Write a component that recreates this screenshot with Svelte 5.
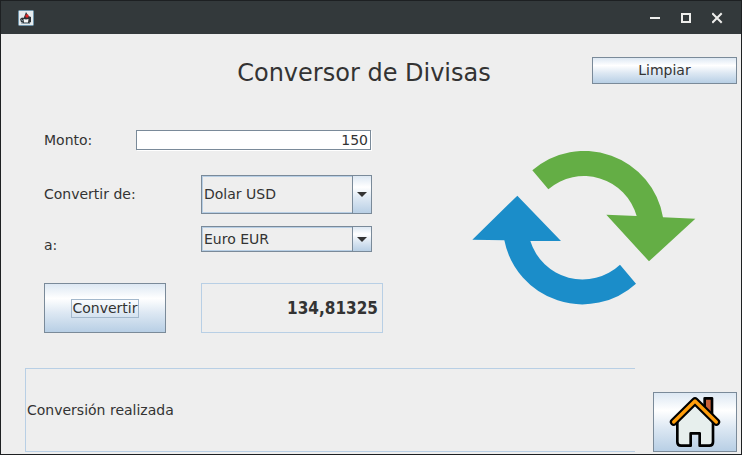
<script>
  let amount = $state('150');
  let from = $state('Dolar USD');
  let to = $state('Euro EUR');
  let result = $state('134,81325');
  let status = $state('Conversión realizada');

  const currencies = ['Dolar USD', 'Euro EUR'];
  const rates = { 'Dolar USD': 1, 'Euro EUR': 0.898755 };

  function convert() {
    const value = (Number(amount) * rates[to]) / rates[from];
    result = String(Number(value.toFixed(5))).replace('.', ',');
    status = 'Conversión realizada';
  }

  function clear() {
    amount = '';
    result = '';
    status = '';
  }
</script>

{#snippet arrow()}
  <span class="arrow" aria-hidden="true">
    <svg width="10" height="5" viewBox="0 0 10 5"><path d="M0 0H10L5 5Z" fill="#333" /></svg>
  </span>
{/snippet}

<div class="window">
  <header class="titlebar">
    <svg class="app-icon" width="16" height="16" viewBox="0 0 16 16" aria-hidden="true">
      <rect x=".5" y=".5" width="15" height="15" rx="1" fill="#e6ebee" stroke="#6f94aa" />
      <path d="M2 9L4 7.5L5.5 8L6.5 6L8 2L10.5 6L13 7V12L11 13H5L3 12Z" fill="#2e3438" />
      <path d="M5.5 9L8 9.5L10.5 9L10 12.5H6Z" fill="#f5f7f8" />
      <path d="M3 9.5L5 11M3 13L6 13.5H12" stroke="#8297a3" fill="none" />
      <circle cx="9" cy="6" r="1.7" fill="#e02222" />
    </svg>
    <div class="controls">
      <button aria-label="Minimizar">
        <svg width="11" height="12" viewBox="0 0 11 12"><path d="M0 6H10" stroke="#eeeeec" stroke-width="2" /></svg>
      </button>
      <button aria-label="Maximizar">
        <svg width="11" height="12" viewBox="0 0 11 12"><rect x="1" y="2" width="8" height="8" fill="none" stroke="#eeeeec" stroke-width="2" /></svg>
      </button>
      <button aria-label="Cerrar">
        <svg width="11" height="12" viewBox="0 0 11 12"><path d="M1 2L9 10M9 2L1 10" stroke="#eeeeec" stroke-width="2" stroke-linecap="square" /></svg>
      </button>
    </div>
  </header>

  <main>
    <div class="top">
      <h1>Conversor de Divisas</h1>
      <button class="metal clear" onclick={clear}>Limpiar</button>
    </div>

    <div class="middle">
      <div class="form">
        <div class="row amount-row">
          <label for="amount">Monto:</label>
          <input id="amount" type="text" bind:value={amount} />
        </div>
        <div class="row from-row">
          <label for="from">Convertir de:</label>
          <div class="combo">
            <select id="from" bind:value={from}>
              {#each currencies as c}<option>{c}</option>{/each}
            </select>
            {@render arrow()}
          </div>
        </div>
        <div class="row to-row">
          <label for="to">a:</label>
          <div class="combo">
            <select id="to" bind:value={to}>
              {#each currencies as c}<option>{c}</option>{/each}
            </select>
            {@render arrow()}
          </div>
        </div>
        <div class="row result-row">
          <button class="metal convert" onclick={convert}><span>Convertir</span></button>
          <output for="amount from to">{result}</output>
        </div>
      </div>

      <svg class="cycle" width="224" height="154" viewBox="36 32 672 462" aria-hidden="true">
        <path fill="#64ae45" d="M217 90A239 239 0 0 1 609 231L706 235L567 363L439 223L530 227A164 164 0 0 0 265 147Z" />
        <path fill="#1b8dc9" d="M528 430A239 239 0 0 1 133 300L37 298L172 166L303 302L211 302A164 164 0 0 0 480 373Z" />
      </svg>
    </div>

    <div class="bottom">
      <div class="status" role="status">{status}</div>
      <button class="metal home" aria-label="Inicio">
        <svg width="54" height="54" viewBox="84 45 162 162">
          <path d="M194 55H216V104H194Z" fill="#c8623a" stroke="#000" stroke-width="8" stroke-linejoin="round" />
          <path d="M112 118L165 66L219 118V186Q219 197 208 197H179V160H152V197H123Q112 197 112 186Z" fill="#e7efed" stroke="#000" stroke-width="8" stroke-linejoin="round" />
          <path d="M101 126L165 63L229 126" fill="none" stroke="#000" stroke-width="23" stroke-linecap="round" stroke-linejoin="round" />
          <path d="M101 126L165 63L229 126" fill="none" stroke="#ff9e0b" stroke-width="10" stroke-linecap="round" stroke-linejoin="round" />
        </svg>
      </button>
    </div>
  </main>
</div>

<style>
  :global(body) {
    margin: 0;
    background: #eee;
  }
  * {
    box-sizing: border-box;
  }
  .window {
    display: flex;
    flex-direction: column;
    min-height: 100vh;
    border: 1px solid #1d2022;
    background: #eee;
    color: #333;
    font: 14px/17px 'DejaVu Sans', sans-serif;
  }
  button,
  input,
  select {
    margin: 0;
    color: inherit;
    font: inherit;
  }
  .titlebar {
    display: flex;
    align-items: center;
    justify-content: space-between;
    height: 33px;
    padding: 0 18px 0 17px;
    background: #33393b;
  }
  .controls {
    display: flex;
    gap: 20px;
  }
  .controls button {
    display: flex;
    padding: 0;
    border: 0;
    background: none;
  }
  main {
    flex: 1;
    display: flex;
    flex-direction: column;
    padding: 23px 4px 2px 24px;
  }
  .top {
    display: flex;
    padding-left: 111px;
  }
  h1 {
    flex: 1;
    margin: 0;
    font-size: 24px;
    font-weight: normal;
    line-height: 32px;
    text-align: center;
  }
  .metal {
    padding: 0;
    border: 1px solid #7a8a99;
    background: linear-gradient(#dde8f3, #fff 30%, #dde8f3 60%, #b8cfe5);
  }
  .clear {
    width: 145px;
    height: 27px;
  }
  .middle {
    display: flex;
    justify-content: space-between;
    align-items: flex-start;
    padding: 41px 41px 0 19px;
  }
  .row {
    display: flex;
    align-items: center;
  }
  .row label {
    width: 157px;
  }
  .row.amount-row label {
    width: 92px;
  }
  input {
    width: 235px;
    height: 20px;
    padding: 0 2px;
    border: 1px solid #7a8a99;
    border-radius: 0;
    outline: 0;
    background: #fff;
    box-shadow: 1px 1px #fff;
    text-align: right;
  }
  .from-row {
    height: 39px;
    margin-top: 25px;
  }
  .to-row {
    height: 26px;
    margin-top: 12px;
  }
  .row.to-row label {
    padding-top: 12px;
  }
  .combo {
    display: grid;
    width: 171px;
    height: 100%;
  }
  select {
    grid-area: 1 / 1;
    appearance: none;
    padding: 0 20px 0 2px;
    border: 1px solid #7a8a99;
    border-radius: 0;
    outline: 0;
    background: #eee;
    box-shadow: inset 0 0 0 1px #b8cfe5;
  }
  .arrow {
    grid-area: 1 / 1;
    justify-self: end;
    display: flex;
    align-items: center;
    justify-content: center;
    width: 20px;
    border: 1px solid #7a8a99;
    background: linear-gradient(#dde8f3, #fff 30%, #dde8f3 60%, #b8cfe5);
    pointer-events: none;
  }
  .result-row {
    gap: 35px;
    margin-top: 31px;
  }
  .convert {
    width: 122px;
    height: 50px;
  }
  .convert span {
    display: inline-block;
    border: 1px solid #a3b8cc;
  }
  output {
    width: 182px;
    height: 50px;
    padding-right: 4px;
    border: 1px solid #b8cfe5;
    font-family: 'DejaVu Sans Condensed', 'DejaVu Sans', sans-serif;
    font-size: 17px;
    font-weight: bold;
    line-height: 48px;
    text-align: right;
  }
  .cycle {
    margin-top: 21px;
  }
  .bottom {
    display: flex;
    align-items: flex-end;
    gap: 18px;
    margin-top: 35px;
  }
  .status {
    flex: 1;
    display: flex;
    align-items: center;
    height: 84px;
    padding-left: 1px;
    border: 1px solid #b8cfe5;
    border-right: 0;
  }
  .home {
    display: flex;
    align-items: center;
    justify-content: center;
    width: 84px;
    height: 60px;
  }
</style>
